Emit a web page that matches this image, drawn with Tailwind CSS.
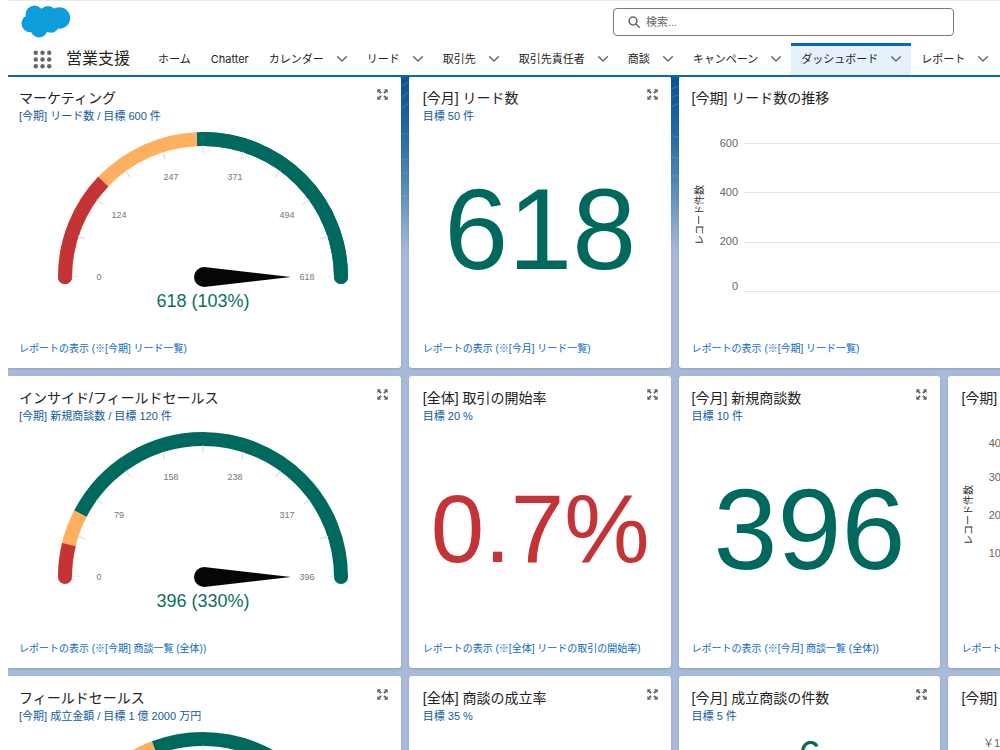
<!DOCTYPE html>
<html lang="ja">
<head>
  <meta charset="UTF-8">
  <meta name="viewport" content="width=device-width,initial-scale=1">
  <title>営業支援 ダッシュボード</title>
  <script src="https://cdn.jsdelivr.net/npm/@tailwindcss/browser@4"></script>
</head>
<body class="h-screen overflow-hidden bg-white pl-2 text-[#222] font-['Liberation_Sans','Noto_Sans_CJK_JP',sans-serif]">

  <!-- 共通アイコン -->
  <svg class="hidden">
    <symbol id="chevron" viewBox="0 0 10 6"><path d="M.7.8 5 5 9.3.8" fill="none" stroke="#666" stroke-width="1.4" stroke-linecap="round" stroke-linejoin="round"/></symbol>
    <symbol id="expand" viewBox="0 0 11 11">
      <path d="M.3.3h3.700L2.900 1.400 4.700 3.600 3.600 4.700 1.400 2.900.3 4zM10.700.3V4L9.600 2.900 7.400 4.700 6.300 3.600 8.100 1.400 7 .3zM.3 10.700V7l1.100 1.100 2.200-1.800 1.100 1.100-1.800 2.200L4 10.700zM10.700 10.700H7l1.100-1.100-1.800-2.200 1.100-1.100 2.200 1.800L10.700 7z" fill="#666"/>
    </symbol>
    <symbol id="dial" viewBox="0 0 300 190">
      <path d="M22.500 152a127.500 127.500 0 0 1 255 0" pathLength="180" fill="none" stroke="#d5dfe5" stroke-width="8" stroke-dasharray=".5 17.500" stroke-dashoffset=".25"/>
      <path d="M151 142a10 10 0 0 0 0 20L238 152z" fill="#060606"/>
    </symbol>
  </svg>

  <header class="relative z-10 border-t border-[#ebe8e5] border-b-2 border-b-[#0b68b8] bg-white">
    <div class="flex h-[42px] items-center pl-3 pr-[46px]">
      <a href="#" aria-label="ホーム">
        <svg class="w-[52px] h-9" viewBox="0 0 52 36">
          <g fill="#0d9dda">
            <circle cx="14.500" cy="10.500" r="9"/>
            <circle cx="28" cy="11" r="9"/>
            <circle cx="39.500" cy="14" r="10.700"/>
            <circle cx="10.300" cy="19.500" r="8.800"/>
            <circle cx="19" cy="25" r="8.500"/>
            <circle cx="31" cy="21" r="7.800"/>
            <path d="M10 10h30v12H14z"/>
          </g>
        </svg>
      </a>
      <label class="ml-auto flex h-7 w-[341px] items-center gap-1.5 rounded-sm border border-[#777] px-3.5">
        <svg class="size-3 shrink-0" viewBox="0 0 12 12" fill="none" stroke="#666" stroke-width="1.500" stroke-linecap="round"><circle cx="5" cy="5" r="3.900"/><path d="m8 8 3.200 3.200"/></svg>
        <input type="search" aria-label="検索" placeholder="検索..." class="w-full text-[11px] outline-none placeholder:text-[#666]">
      </label>
    </div>
    <div class="flex h-8 items-center whitespace-nowrap">
      <button class="ml-[25px]" aria-label="アプリケーションランチャー">
        <svg class="size-[19px]" viewBox="0 0 19 19" fill="#666">
          <circle cx="2.800" cy="2.800" r="2.200"/><circle cx="9.500" cy="2.800" r="2.200"/><circle cx="16.200" cy="2.800" r="2.200"/>
          <circle cx="2.800" cy="9.500" r="2.200"/><circle cx="9.500" cy="9.500" r="2.200"/><circle cx="16.200" cy="9.500" r="2.200"/>
          <circle cx="2.800" cy="16.200" r="2.200"/><circle cx="9.500" cy="16.200" r="2.200"/><circle cx="16.200" cy="16.200" r="2.200"/>
        </svg>
      </button>
      <h1 class="ml-3.5 w-[82px] text-base leading-5">営業支援</h1>
      <nav class="flex h-full text-[11px] font-['Inter','Noto_Sans_CJK_JP',sans-serif]">
        <a href="#" class="flex items-center px-2.5">ホーム</a>
        <a href="#" class="flex items-center px-2.5">Chatter</a>
        <a href="#" class="flex items-center gap-[13px] px-2.5">カレンダー<svg class="h-1.5 w-2.5"><use href="#chevron"/></svg></a>
        <a href="#" class="flex items-center gap-[13px] px-2.5">リード<svg class="h-1.5 w-2.5"><use href="#chevron"/></svg></a>
        <a href="#" class="flex items-center gap-[13px] px-2.5">取引先<svg class="h-1.5 w-2.5"><use href="#chevron"/></svg></a>
        <a href="#" class="flex items-center gap-[13px] px-2.5">取引先責任者<svg class="h-1.5 w-2.5"><use href="#chevron"/></svg></a>
        <a href="#" class="flex items-center gap-[13px] px-2.5">商談<svg class="h-1.5 w-2.5"><use href="#chevron"/></svg></a>
        <a href="#" class="flex items-center gap-[13px] px-2.5">キャンペーン<svg class="h-1.5 w-2.5"><use href="#chevron"/></svg></a>
        <a href="#" aria-current="page" class="flex items-center gap-[13px] border-t-3 border-[#0b68b8] bg-[#e6f0fa] px-2.5 pb-[3px]">ダッシュボード<svg class="h-1.5 w-2.5"><use href="#chevron"/></svg></a>
        <a href="#" class="flex items-center gap-[13px] px-2.5">レポート<svg class="h-1.5 w-2.5"><use href="#chevron"/></svg></a>
      </nav>
    </div>
  </header>

  <main class="relative -mt-px overflow-hidden bg-[#a7bad9] bg-[linear-gradient(#07549a_0,#1f67a5_50px,#5087b9_105px,#a7bad9_175px)] bg-no-repeat">
    <!-- 背景の波模様 -->
    <svg class="absolute inset-0 h-44 w-full" fill="none" stroke="#8fb8dc" stroke-opacity=".3">
      <path d="M390 12l14-8M390 24l14-10M390 36l14-12M390 60q8-6 14 2M390 80q8 8 14 0M390 98q8-4 14 3M390 122q7-6 14 1M390 132h14"/>
      <path d="M660 14l14-5M660 22l14-4M660 32l14-6M660 56q8 8 14 4M660 78q8 6 14 4M660 100h14M660 144q10-10 14 10"/>
    </svg>

    <div class="relative grid w-[121.2%] auto-rows-[292px] grid-cols-[3fr_2fr_2fr_2fr] gap-2 whitespace-nowrap">

      <!-- 1段目 -->
      <section class="flex flex-col rounded-r-[3px] bg-white py-[11px] pr-[13px] pl-[11px] shadow-sm">
        <div class="flex h-[38px] items-start justify-between">
          <div>
            <h2 class="text-sm leading-[22px]">マーケティング</h2>
            <p class="text-[11px] leading-[14px] text-[#125aa0]">[今期] リード数 / 目標 600 件</p>
          </div>
          <button class="mt-0.5" aria-label="拡大"><svg class="size-[11px]"><use href="#expand"/></svg></button>
        </div>
        <div class="flex flex-1 justify-center">
          <svg class="h-[190px] w-[300px]" viewBox="0 0 300 190">
            <g fill="none" stroke-width="14">
              <path d="M12 152a138 138 0 0 1 276 0" stroke="#00695e" stroke-linecap="round" pathLength="180" stroke-dasharray="0 91 300"/>
              <path d="M288 152a138 138 0 0 0-276 0" stroke="#00695e" pathLength="180" stroke-dasharray="92.600 300"/>
              <path d="M12 152a138 138 0 0 1 276 0" stroke="#ffb05f" pathLength="180" stroke-dasharray="87.400 300"/>
              <path d="M12 152a138 138 0 0 1 276 0" stroke="#c43335" pathLength="180" stroke-dasharray="43.700 300"/>
            </g>
            <circle cx="12" cy="152" r="7" fill="#c43335"/>
            <circle cx="288" cy="152" r="7" fill="#00695e"/>
            <use href="#dial"/>
            <g class="fill-[#777] text-[9px]" text-anchor="middle">
              <text x="46" y="155">0</text><text x="66" y="93">124</text><text x="118" y="55">247</text>
              <text x="182" y="55">371</text><text x="234" y="93">494</text><text x="254" y="155">618</text>
            </g>
            <text x="150" y="182" text-anchor="middle" class="fill-[#0a6f60] text-lg">618 (103%)</text>
          </svg>
        </div>
        <a href="#" class="text-[10px] leading-4 text-[#0b6bc2]">レポートの表示 (※[今期] リード一覧)</a>
      </section>

      <section class="flex flex-col rounded-[3px] bg-white py-[11px] pr-[13px] pl-3.5 shadow-sm">
        <div class="flex h-[38px] items-start justify-between">
          <div>
            <h2 class="text-sm leading-[22px]">[今月] リード数</h2>
            <p class="text-[11px] leading-[14px] text-[#125aa0]">目標 50 件</p>
          </div>
          <button class="mt-0.5" aria-label="拡大"><svg class="size-[11px]"><use href="#expand"/></svg></button>
        </div>
        <div class="flex flex-1 items-center justify-center pb-2 text-[115px] leading-none text-[#00695e]">618</div>
        <a href="#" class="text-[10px] leading-4 text-[#0b6bc2]">レポートの表示 (※[今月] リード一覧)</a>
      </section>

      <section class="col-span-2 flex flex-col rounded-[3px] bg-white px-[13px] py-[11px] shadow-sm">
        <div class="h-[38px]">
          <h2 class="text-sm leading-[22px]">[今期] リード数の推移</h2>
        </div>
        <svg class="w-full flex-1">
          <text x="-90" y="11" transform="rotate(-90)" text-anchor="middle" class="fill-[#333] text-[10px]">レコード件数</text>
          <g class="fill-[#666] text-[11px]" text-anchor="end">
            <text x="46" y="22">600</text><text x="46" y="71">400</text><text x="46" y="120">200</text><text x="46" y="165">0</text>
          </g>
          <g fill="#e3e3e3">
            <rect x="52" y="18" width="100%" height="1"/><rect x="52" y="67" width="100%" height="1"/><rect x="52" y="117" width="100%" height="1"/><rect x="52" y="166" width="100%" height="1"/>
          </g>
        </svg>
        <a href="#" class="text-[10px] leading-4 text-[#0b6bc2]">レポートの表示 (※[今期] リード一覧)</a>
      </section>

      <!-- 2段目 -->
      <section class="flex flex-col rounded-r-[3px] bg-white py-[11px] pr-[13px] pl-[11px] shadow-sm">
        <div class="flex h-[38px] items-start justify-between">
          <div>
            <h2 class="text-sm leading-[22px]">インサイド/フィールドセールス</h2>
            <p class="text-[11px] leading-[14px] text-[#125aa0]">[今期] 新規商談数 / 目標 120 件</p>
          </div>
          <button class="mt-0.5" aria-label="拡大"><svg class="size-[11px]"><use href="#expand"/></svg></button>
        </div>
        <div class="flex flex-1 justify-center">
          <svg class="h-[190px] w-[300px]" viewBox="0 0 300 190">
            <g fill="none" stroke-width="14">
              <path d="M288 152a138 138 0 0 0-276 0" stroke="#00695e" pathLength="180" stroke-dasharray="152.700 300"/>
              <path d="M12 152a138 138 0 0 1 276 0" stroke="#ffb05f" pathLength="180" stroke-dasharray="27.300 300"/>
              <path d="M12 152a138 138 0 0 1 276 0" stroke="#c43335" pathLength="180" stroke-dasharray="13.600 300"/>
            </g>
            <circle cx="12" cy="152" r="7" fill="#c43335"/>
            <circle cx="288" cy="152" r="7" fill="#00695e"/>
            <use href="#dial"/>
            <g class="fill-[#777] text-[9px]" text-anchor="middle">
              <text x="46" y="155">0</text><text x="66" y="93">79</text><text x="118" y="55">158</text>
              <text x="182" y="55">238</text><text x="234" y="93">317</text><text x="254" y="155">396</text>
            </g>
            <text x="150" y="182" text-anchor="middle" class="fill-[#0a6f60] text-lg">396 (330%)</text>
          </svg>
        </div>
        <a href="#" class="text-[10px] leading-4 text-[#0b6bc2]">レポートの表示 (※[今期] 商談一覧 (全体))</a>
      </section>

      <section class="flex flex-col rounded-[3px] bg-white py-[11px] pr-[13px] pl-3.5 shadow-sm">
        <div class="flex h-[38px] items-start justify-between">
          <div>
            <h2 class="text-sm leading-[22px]">[全体] 取引の開始率</h2>
            <p class="text-[11px] leading-[14px] text-[#125aa0]">目標 20 %</p>
          </div>
          <button class="mt-0.5" aria-label="拡大"><svg class="size-[11px]"><use href="#expand"/></svg></button>
        </div>
        <div class="flex flex-1 items-center justify-center pb-2 text-[96px] leading-none text-[#c43335]">0.7%</div>
        <a href="#" class="text-[10px] leading-4 text-[#0b6bc2]">レポートの表示 (※[全体] リードの取引の開始率)</a>
      </section>

      <section class="flex flex-col rounded-[3px] bg-white px-[13px] py-[11px] shadow-sm">
        <div class="flex h-[38px] items-start justify-between">
          <div>
            <h2 class="text-sm leading-[22px]">[今月] 新規商談数</h2>
            <p class="text-[11px] leading-[14px] text-[#125aa0]">目標 10 件</p>
          </div>
          <button class="mt-0.5" aria-label="拡大"><svg class="size-[11px]"><use href="#expand"/></svg></button>
        </div>
        <div class="flex flex-1 items-center justify-center pb-2 text-[115px] leading-none text-[#00695e]">396</div>
        <a href="#" class="text-[10px] leading-4 text-[#0b6bc2]">レポートの表示 (※[今月] 商談一覧 (全体))</a>
      </section>

      <section class="flex flex-col rounded-[3px] bg-white px-[13px] py-[11px] shadow-sm">
        <div class="h-[38px]">
          <h2 class="text-sm leading-[22px]">[今期]</h2>
        </div>
        <svg class="w-full flex-1">
          <text x="-90" y="11" transform="rotate(-90)" text-anchor="middle" class="fill-[#333] text-[10px]">レコード件数</text>
          <g class="fill-[#666] text-[11px]" text-anchor="end">
            <text x="46" y="22">400</text><text x="46" y="56">300</text><text x="46" y="94">200</text><text x="46" y="132">100</text>
          </g>
        </svg>
        <a href="#" class="text-[10px] leading-4 text-[#0b6bc2]">レポートの表示</a>
      </section>

      <!-- 3段目 -->
      <section class="flex flex-col rounded-r-[3px] bg-white py-[11px] pr-[13px] pl-[11px] shadow-sm">
        <div class="flex h-[38px] items-start justify-between">
          <div>
            <h2 class="text-sm leading-[22px]">フィールドセールス</h2>
            <p class="text-[11px] leading-[14px] text-[#125aa0]">[今期] 成立金額 / 目標 1 億 2000 万円</p>
          </div>
          <button class="mt-0.5" aria-label="拡大"><svg class="size-[11px]"><use href="#expand"/></svg></button>
        </div>
        <div class="flex flex-1 justify-center">
          <svg class="h-[190px] w-[300px]" viewBox="0 0 300 190">
            <g fill="none" stroke-width="14">
              <path d="M288 152a138 138 0 0 0-276 0" stroke="#00695e" pathLength="180" stroke-dasharray="110.700 300"/>
              <path d="M12 152a138 138 0 0 1 276 0" stroke="#ffb05f" pathLength="180" stroke-dasharray="69.300 300"/>
              <path d="M12 152a138 138 0 0 1 276 0" stroke="#c43335" pathLength="180" stroke-dasharray="34.600 300"/>
            </g>
            <circle cx="12" cy="152" r="7" fill="#c43335"/>
            <circle cx="288" cy="152" r="7" fill="#00695e"/>
            <use href="#dial"/>
          </svg>
        </div>
      </section>

      <section class="flex flex-col rounded-[3px] bg-white py-[11px] pr-[13px] pl-3.5 shadow-sm">
        <div class="flex h-[38px] items-start justify-between">
          <div>
            <h2 class="text-sm leading-[22px]">[全体] 商談の成立率</h2>
            <p class="text-[11px] leading-[14px] text-[#125aa0]">目標 35 %</p>
          </div>
          <button class="mt-0.5" aria-label="拡大"><svg class="size-[11px]"><use href="#expand"/></svg></button>
        </div>
      </section>

      <section class="flex flex-col rounded-[3px] bg-white px-[13px] py-[11px] shadow-sm">
        <div class="flex h-[38px] items-start justify-between">
          <div>
            <h2 class="text-sm leading-[22px]">[今月] 成立商談の件数</h2>
            <p class="text-[11px] leading-[14px] text-[#125aa0]">目標 5 件</p>
          </div>
          <button class="mt-0.5" aria-label="拡大"><svg class="size-[11px]"><use href="#expand"/></svg></button>
        </div>
        <div class="flex flex-1 justify-center pt-2.5 text-[40px] leading-none text-[#00695e]">6</div>
      </section>

      <section class="flex flex-col rounded-[3px] bg-white px-[13px] py-[11px] shadow-sm">
        <div class="h-[38px]">
          <h2 class="text-sm leading-[22px]">[今期]</h2>
        </div>
        <svg class="w-full flex-1">
          <text x="22" y="22" class="fill-[#666] text-[11px]">￥100</text>
        </svg>
      </section>
    </div>
  </main>
</body>
</html>
